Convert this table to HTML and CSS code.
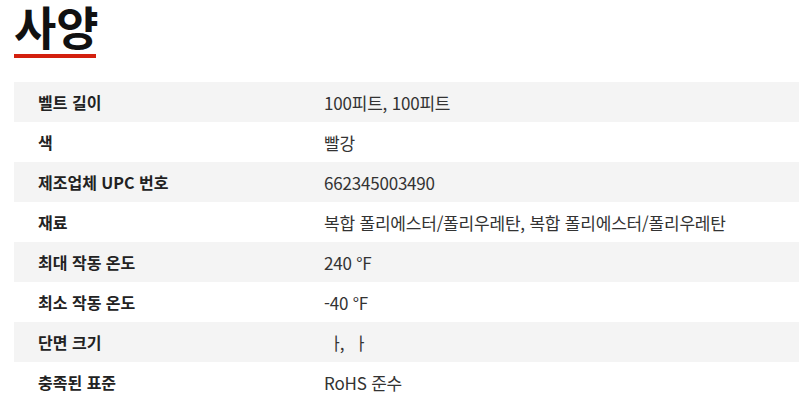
FILE: index.html
```html
<!DOCTYPE html>
<html lang="ko">
<head>
<meta charset="utf-8">
<link rel="stylesheet" href="styles.css">
</head>
<body>
<section class="specs">
  <h2 class="title">사양</h2>
  <div class="table">
    <div class="row"><div class="label">벨트 길이</div><div class="value">100피트, 100피트</div></div>
    <div class="row"><div class="label">색</div><div class="value">빨강</div></div>
    <div class="row"><div class="label">제조업체 UPC 번호</div><div class="value">662345003490</div></div>
    <div class="row"><div class="label">재료</div><div class="value">복합 폴리에스터/폴리우레탄, 복합 폴리에스터/폴리우레탄</div></div>
    <div class="row"><div class="label">최대 작동 온도</div><div class="value">240 °F</div></div>
    <div class="row"><div class="label">최소 작동 온도</div><div class="value">-40 °F</div></div>
    <div class="row"><div class="label">단면 크기</div><div class="value">ᅟᅡ, ᅟᅡ</div></div>
    <div class="row"><div class="label">충족된 표준</div><div class="value">RoHS 준수</div></div>
  </div>
</section>
</body>
</html>
```
FILE: styles.css
```css
html, body {
  margin: 0;
  padding: 0;
  background: #fff;
}
body {
  font-family: "Noto Sans CJK KR", "Noto Sans", sans-serif;
  color: #222;
}
.specs {
  padding-left: 14px;
}
.title {
  margin: 0;
  font-size: 46px;
  font-weight: 700;
  line-height: 50px;
  color: #111;
  position: relative;
  padding-bottom: 8px;
}
.title::after {
  content: "";
  position: absolute;
  left: 0;
  bottom: 0;
  width: 82px;
  height: 4px;
  background: #d3200e;
}
.table {
  margin-top: 24px;
}
.row {
  display: grid;
  grid-template-columns: 286px 1fr;
  height: 40px;
  align-items: center;
  padding-left: 24px;
}
.row:nth-child(odd) {
  background: #f4f4f4;
}
.label {
  font-size: 16px;
  font-weight: 700;
  color: #222;
}
.value {
  font-size: 17px;
  letter-spacing: -0.2px;
  color: #333;
}
```
